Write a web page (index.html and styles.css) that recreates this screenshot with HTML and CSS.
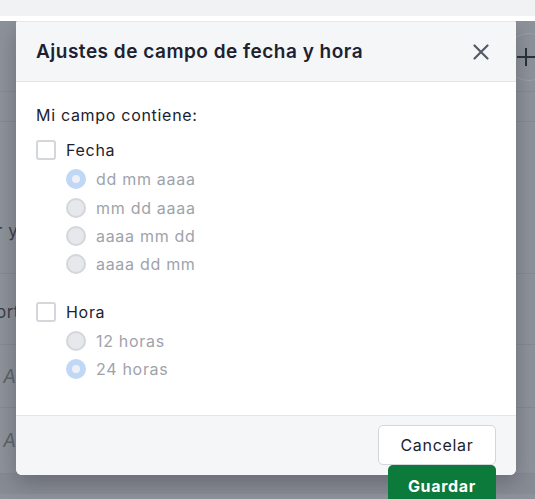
FILE: index.html
```html
<!DOCTYPE html>
<html lang="es">
<head>
<meta charset="utf-8">
<title>Ajustes de campo de fecha y hora</title>
<link rel="stylesheet" href="styles.css">
</head>
<body>
<div class="topbar"></div>
<div class="topgap"></div>
<div class="stage">
  <div class="page">
    <div class="page-head">
      <div class="plus-btn"><span class="plus-h"></span><span class="plus-v"></span></div>
    </div>
    <div class="page-row r1"></div>
    <div class="page-row r2"><span class="bg-text">r y</span></div>
    <div class="page-row r3"><span class="bg-text">ort</span></div>
    <div class="page-row r4"><span class="bg-text it">A</span></div>
    <div class="page-row r5"><span class="bg-text it">A</span></div>
    <div class="page-row r6"></div>
  </div>

  <div class="modal">
    <div class="modal-head">
      <h2 class="modal-title">Ajustes de campo de fecha y hora</h2>
      <button class="close-btn" aria-label="Cerrar">
        <svg width="16" height="16" viewBox="0 0 16 16"><path d="M1.5 1.5 L14.5 14.5 M14.5 1.5 L1.5 14.5" stroke="#545b66" stroke-width="2.2" stroke-linecap="round"/></svg>
      </button>
    </div>
    <div class="modal-body">
      <p class="intro">Mi campo contiene:</p>
      <div class="group">
        <label class="check-row"><span class="checkbox"></span><span class="check-label">Fecha</span></label>
        <div class="radios">
          <label class="radio-row"><span class="radio on"></span><span class="radio-label">dd mm aaaa</span></label>
          <label class="radio-row"><span class="radio"></span><span class="radio-label">mm dd aaaa</span></label>
          <label class="radio-row"><span class="radio"></span><span class="radio-label">aaaa mm dd</span></label>
          <label class="radio-row"><span class="radio"></span><span class="radio-label">aaaa dd mm</span></label>
        </div>
      </div>
      <div class="group g2">
        <label class="check-row"><span class="checkbox"></span><span class="check-label">Hora</span></label>
        <div class="radios">
          <label class="radio-row"><span class="radio"></span><span class="radio-label">12 horas</span></label>
          <label class="radio-row"><span class="radio on"></span><span class="radio-label">24 horas</span></label>
        </div>
      </div>
    </div>
    <div class="modal-foot">
      <div class="foot-actions">
        <button class="btn btn-cancel">Cancelar</button>
        <button class="btn btn-save">Guardar</button>
      </div>
    </div>
  </div>
</div>
</body>
</html>
```
FILE: styles.css
```css
* { box-sizing: border-box; }
html, body { margin: 0; padding: 0; }
body {
  width: 535px;
  height: 499px;
  overflow: hidden;
  font-family: Inter, "Noto Sans", sans-serif;
  background: #ffffff;
}
.topbar { height: 16px; background: #f1f2f4; }
.topgap { height: 5px; background: #ffffff; }
.stage {
  position: relative;
  height: 478px;
  background: #8e939b;
  overflow: hidden;
}
.page { display: flex; flex-direction: column; }
.page-head {
  height: 71px;
  border-bottom: 1px solid #858a92;
  position: relative;
}
.plus-btn {
  position: absolute;
  left: 505px;
  top: 12px;
  width: 48px;
  height: 48px;
  border-radius: 50%;
  border: 1px solid #9da1a8;
}
.plus-h, .plus-v { position: absolute; background: #2a303a; }
.plus-h { left: 11px; top: 22px; width: 18px; height: 2px; }
.plus-v { left: 19px; top: 14px; width: 2px; height: 18px; }
.page-row {
  border-bottom: 1px solid #858a92;
  display: flex;
  align-items: center;
  font-size: 16px;
}
.r1 { height: 30px; }
.r2 { height: 152px; align-items: flex-end; padding-bottom: 32px; }
.r3 { height: 71px; padding-top: 6px; }
.r4 { height: 63px; }
.r5 { height: 66px; }
.r6 { height: 20px; border-bottom: none; background: #888c94; }
.bg-text { color: #3a3e45; margin-left: -4px; font-size: 17px; letter-spacing: 0.5px; }
.bg-text.it { font-style: italic; color: #5f636a; margin-left: 3px; font-size: 19px; }

.modal {
  position: absolute;
  left: 16px;
  top: 0;
  width: 500px;
  height: 454px;
  background: #ffffff;
  border-radius: 2px 2px 6px 6px;
  box-shadow: 0 8px 22px rgba(40, 44, 52, 0.35);
  display: flex;
  flex-direction: column;
}
.modal-head {
  height: 61px;
  background: #f5f6f8;
  border-top: 1px solid #e6e8eb;
  border-bottom: 1px solid #e3e5e8;
  display: flex;
  align-items: center;
  justify-content: space-between;
  padding: 0 21px 0 20px;
  border-radius: 2px 2px 0 0;
}
.modal-title {
  margin: 0;
  font-size: 19px;
  font-weight: 600;
  color: #1c2230;
  letter-spacing: 0.5px;
}
.close-btn {
  width: 28px;
  height: 28px;
  border: none;
  background: transparent;
  padding: 0;
  display: flex;
  align-items: center;
  justify-content: center;
}
.modal-body {
  flex: 1;
  padding: 22px 20px 0 20px;
}
.intro {
  margin: 0 0 11px 0;
  font-size: 16px;
  letter-spacing: 0.7px;
  color: #1c2230;
  line-height: 22px;
}
.group { display: flex; flex-direction: column; }
.g2 { margin-top: 20px; }
.check-row {
  display: flex;
  align-items: center;
  gap: 10px;
  height: 26px;
}
.checkbox {
  width: 20px;
  height: 20px;
  border: 2px solid #d3d6db;
  border-radius: 3px;
  background: #ffffff;
}
.check-label { font-size: 16px; letter-spacing: 0.7px; color: #1c2230; }
.radios {
  display: flex;
  flex-direction: column;
  padding-left: 30px;
  margin-top: 2px;
}
.radio-row {
  display: flex;
  align-items: center;
  gap: 10px;
  height: 28.4px;
}
.radio {
  width: 20px;
  height: 20px;
  border-radius: 50%;
  background: #e6e8eb;
  border: 2px solid #d3d6db;
}
.radio.on {
  border: 6px solid #c0d7f6;
  background: #eef2f8;
}
.radio-label { font-size: 16px; letter-spacing: 0.7px; color: #9ea3ab; }

.modal-foot {
  height: 60px;
  background: #f5f6f8;
  border-top: 1px solid #e3e5e8;
  border-radius: 0 0 6px 6px;
  display: flex;
  justify-content: flex-end;
  align-items: flex-start;
  padding: 9px 20px 0 20px;
}
.foot-actions {
  display: flex;
  flex-direction: column;
  align-items: flex-end;
}
.btn {
  font-family: Inter, "Noto Sans", sans-serif;
  font-size: 16px;
  letter-spacing: 0.7px;
  border-radius: 5px;
}
.btn-cancel {
  width: 118px;
  height: 40px;
  background: #ffffff;
  border: 1px solid #d3d6db;
  color: #1c2230;
}
.btn-save {
  width: 108px;
  height: 42px;
  background: #0b7a3b;
  border: none;
  color: #ffffff;
  font-weight: 700;
  padding: 0;
  line-height: 42px;
  text-align: center;
}
```
